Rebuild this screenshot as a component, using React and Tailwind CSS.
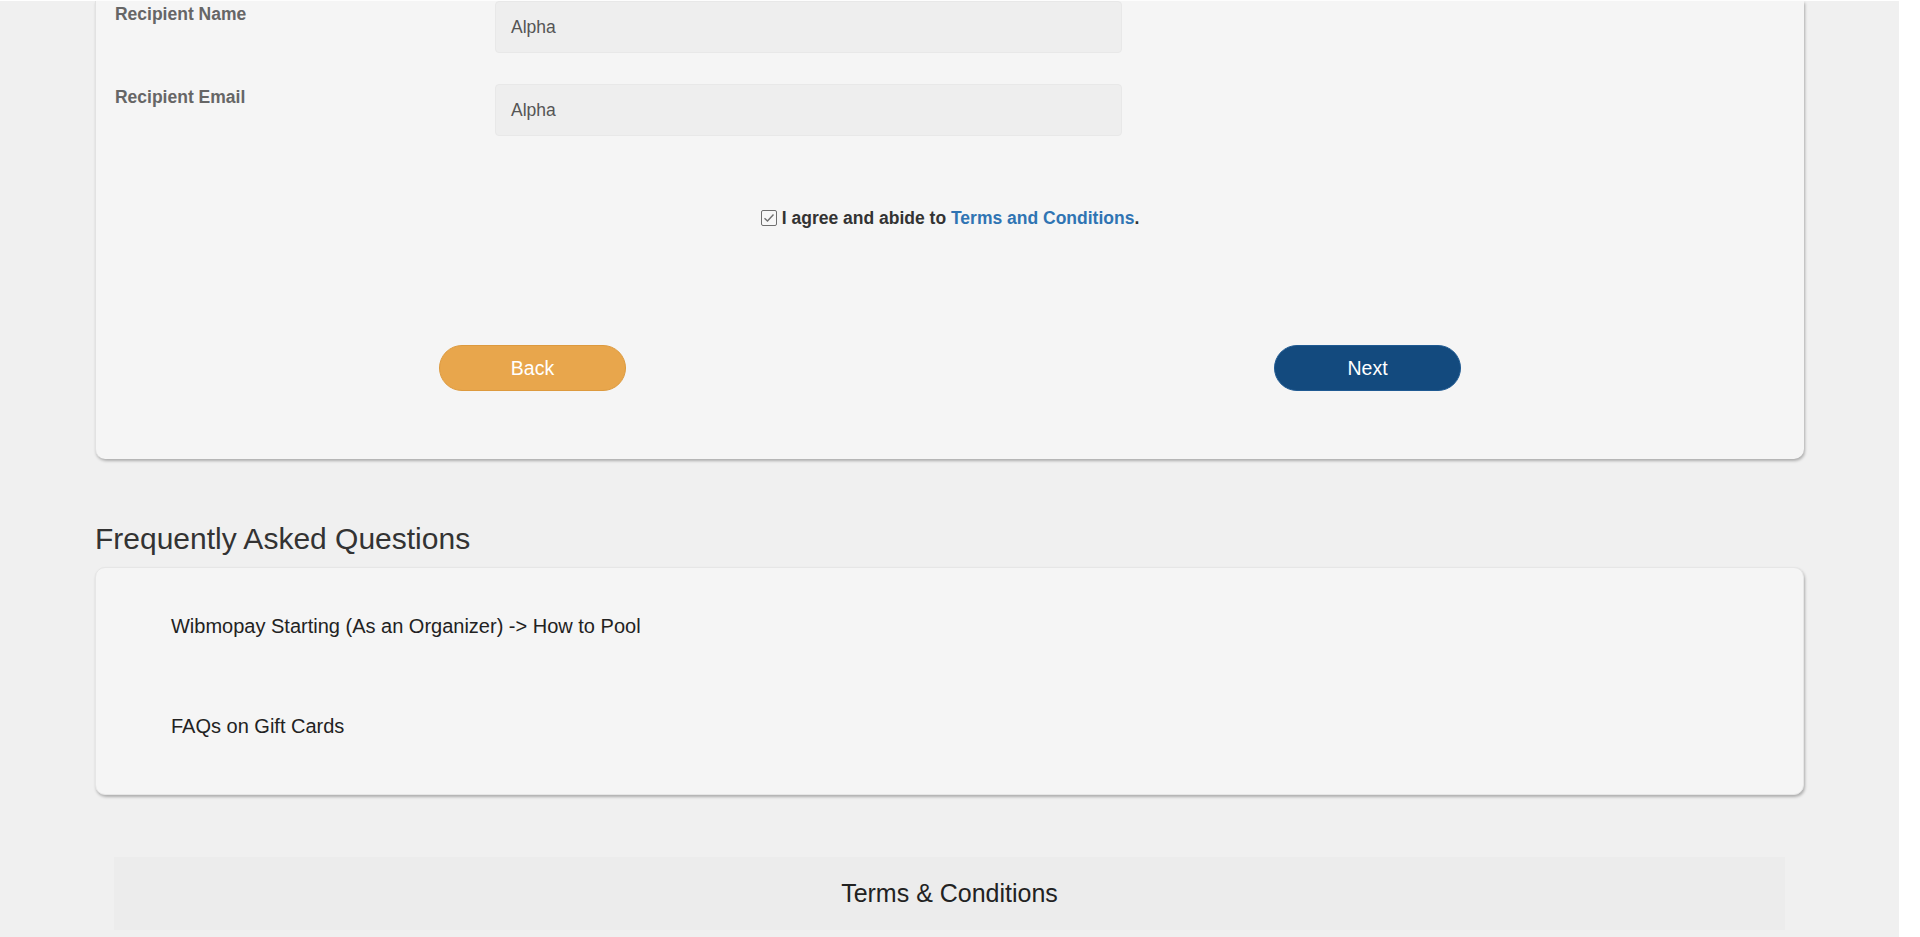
import React from 'react';

const FieldRow = ({ label, value }) => (
  <div className="flex items-start">
    <div className="w-[380px] text-[17.5px] font-bold text-[#666666]">{label}</div>
    <div className="flex h-[52px] w-[627px] items-center rounded-[4px] border border-[#e8e8e8] bg-[#eeeeee] px-[15px] text-[17.5px] text-[#555555]">
      {value}
    </div>
  </div>
);

const CheckIcon = () => (
  <svg width="16" height="16" viewBox="0 0 16 16" className="shrink-0">
    <rect x="0.5" y="0.5" width="15" height="15" rx="1.5" fill="#f7f7f7" stroke="#6f6f6f" />
    <path d="M3.5 8.2 L6.5 11 L12.5 4.5" fill="none" stroke="#6f6f6f" strokeWidth="1.4" />
  </svg>
);

export default function App() {
  return (
    <div className="flex min-h-screen border-t border-white bg-white font-['Liberation_Sans',Arial,sans-serif]">
      <div className="flex-1 bg-[#f0f0f0] pb-[7px]">
        {/* Form card (top scrolled out of view) */}
        <div className="mx-auto w-[90%] rounded-b-[10px] border-l border-[#e2e2e2] bg-[#f5f5f5] px-[19px] shadow-[1px_2px_3px_rgba(0,0,0,0.28)]">
          <div className="flex flex-col gap-[31px]">
            <FieldRow label="Recipient Name" value="Alpha" />
            <FieldRow label="Recipient Email" value="Alpha" />
          </div>

          <div className="mt-[69px] flex items-center justify-center gap-[5px] text-[17.5px] font-bold text-[#333333]">
            <CheckIcon />
            <span>
              I agree and abide to <a className="text-[#2f74b3]">Terms and Conditions</a>.
            </span>
          </div>

          <div className="mt-[114px] grid grid-cols-2 pb-[68px]">
            <div className="flex justify-center">
              <button className="h-[46px] w-[187px] rounded-full border border-[#dd9a3e] bg-[#e8a64c] text-[19.5px] text-white">
                Back
              </button>
            </div>
            <div className="flex justify-center">
              <button className="h-[46px] w-[187px] rounded-full border border-[#1f5a92] bg-[#134a7e] text-[19.5px] text-white">
                Next
              </button>
            </div>
          </div>
        </div>

        {/* FAQ */}
        <div className="mx-auto mt-[63px] w-[90%]">
          <h2 className="text-[30px] leading-[34px] text-[#333333]">Frequently Asked Questions</h2>
          <div className="mt-[11px] rounded-[10px] border border-[#e6e6e6] bg-[#f5f5f5] pt-[8px] pb-[18px] pl-[75px] text-[20px] text-[#222222] shadow-[1px_2px_3px_rgba(0,0,0,0.28)]">
            <div className="flex h-[100px] items-center">Wibmopay Starting (As an Organizer) -&gt; How to Pool</div>
            <div className="flex h-[100px] items-center">FAQs on Gift Cards</div>
          </div>
        </div>

        {/* Terms */}
        <div className="mx-auto mt-[62px] w-[90%] px-[19px]">
          <div className="flex h-[73px] items-center justify-center bg-[#ececec] text-[25px] text-[#222222]">
            Terms &amp; Conditions
          </div>
        </div>
      </div>
      <div className="w-[21px] bg-white" />
    </div>
  );
}
